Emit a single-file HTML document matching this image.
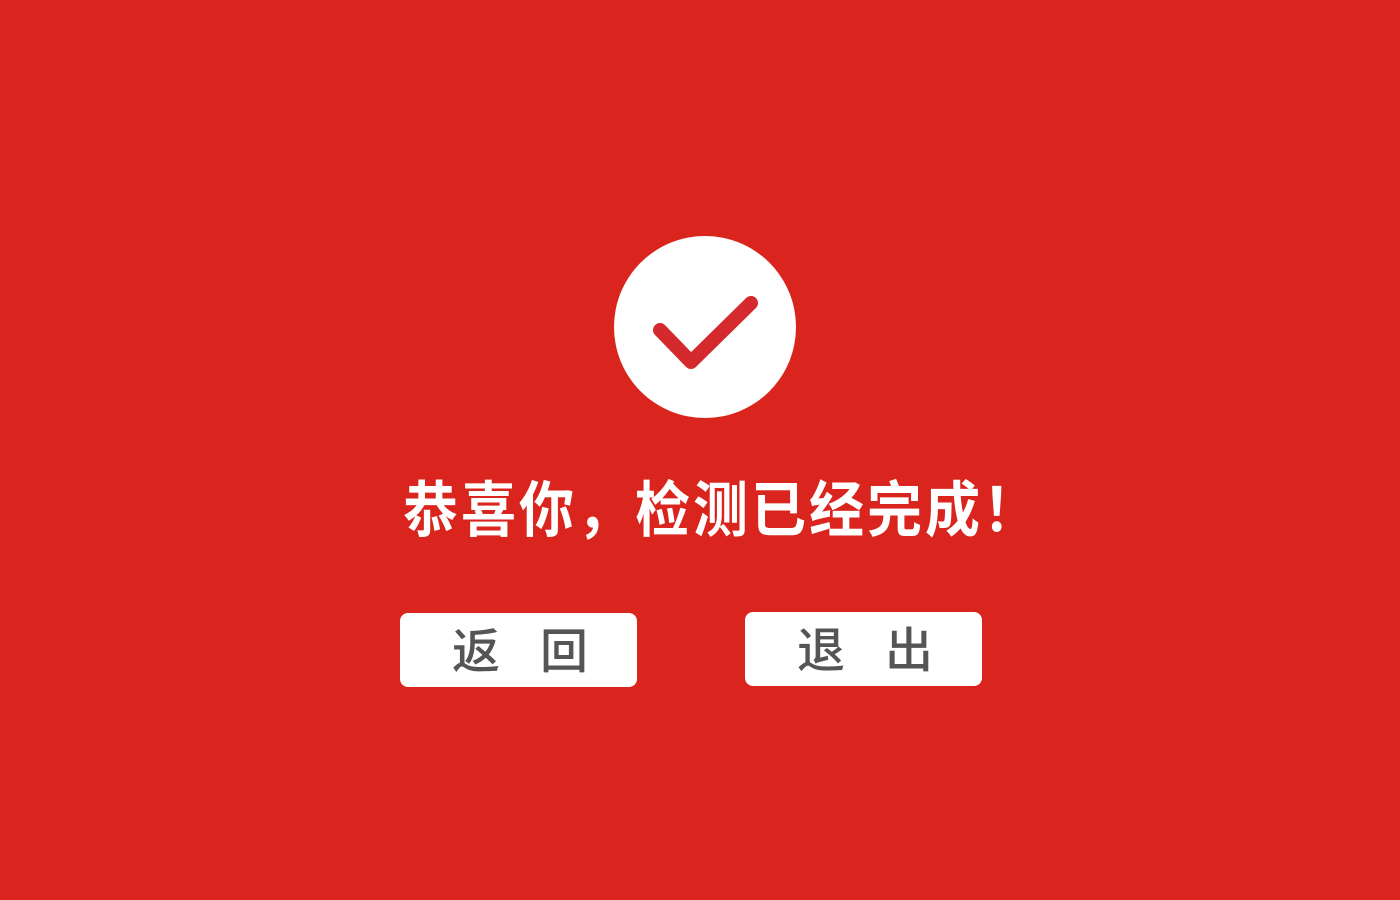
<!DOCTYPE html>
<html><head><meta charset="utf-8"><style>
body{margin:0;width:1400px;height:900px;background:#d9251d;overflow:hidden;position:relative;font-family:"Liberation Sans","Noto Sans CJK SC",sans-serif}
.t{position:absolute;left:403px;top:470px;font-size:55px;line-height:80px;color:#fff;font-weight:bold;white-space:nowrap;letter-spacing:3px;transform:scaleY(1.1);transform-origin:0 50%}
.b{position:absolute;width:237px;height:74px;background:#fff;border-radius:8px;color:#555;font-size:48px;line-height:80px;font-weight:500}
.b span{position:absolute;top:0}
</style></head><body>
<svg style="position:absolute;left:0;top:0" width="1400" height="900">
<circle cx="705" cy="327" r="91" fill="#fff"/>
<polyline points="660,330 691,362 751,303" fill="none" stroke="#d42a2e" stroke-width="14" stroke-linecap="round" stroke-linejoin="round"/>
</svg>
<div class="t">恭喜你，检测已经完成！</div>
<div class="b" style="left:400px;top:613px"><span style="left:52px">返</span><span style="left:140px">回</span></div>
<div class="b" style="left:745px;top:612px"><span style="left:52px">退</span><span style="left:140px">出</span></div>
</body></html>
